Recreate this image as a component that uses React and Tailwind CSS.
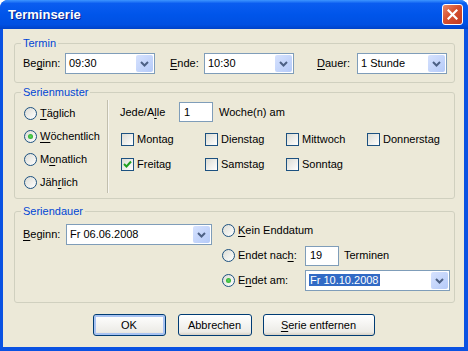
import React from 'react'

function U({ children }) {
    return <span className="underline decoration-1 underline-offset-[2px]">{children}</span>
}

function DropButton() {
    return (
        <div className="mr-px flex h-[17px] w-[17px] items-center justify-center rounded-[2px] bg-[linear-gradient(135deg,#D6E2FE,#B5CAF8)]">
            <svg width="9" height="6" viewBox="0 0 9 6">
                <path d="M1 1 L4.5 4.5 L8 1" fill="none" stroke="#4D6185" strokeWidth="2" />
            </svg>
        </div>
    )
}

function Combo({ className, value, selected }) {
    return (
        <div className={`flex h-[21px] items-center border border-[#7F9DB9] bg-white ${className}`}>
            <div className="flex-1 pl-[3px] whitespace-nowrap">
                {selected ? <span className="bg-[#316AC5] px-px text-white">{value}</span> : value}
            </div>
            <DropButton />
        </div>
    )
}

function Radio({ checked, children, labelClass = '' }) {
    return (
        <div className="flex items-center">
            <span className="flex h-[13px] w-[13px] items-center justify-center rounded-full border border-[#1C5180] bg-[linear-gradient(135deg,#DCDCD4,#FFFFFF)]">
                {checked && <span className="h-[5px] w-[5px] rounded-full bg-[radial-gradient(circle,#5BD65B,#21A121)]" />}
            </span>
            <span className={`ml-[3px] whitespace-nowrap ${labelClass}`}>{children}</span>
        </div>
    )
}

function Check({ checked, children }) {
    return (
        <div className="flex h-[13px] items-center">
            <span className="flex h-[13px] w-[13px] items-center justify-center border border-[#1C5180] bg-[linear-gradient(135deg,#DCDCD4,#FFFFFF)]">
                {checked && (
                    <svg width="9" height="9" viewBox="0 0 9 9">
                        <path d="M1 4 L3.5 6.5 L8 1.5" fill="none" stroke="#21A121" strokeWidth="2" />
                    </svg>
                )}
            </span>
            <span className="ml-[3px] whitespace-nowrap">{children}</span>
        </div>
    )
}

function TextBox({ value }) {
    return (
        <div className="flex h-[20px] w-[34px] items-center border border-[#7F9DB9] bg-white pl-[4px]">{value}</div>
    )
}

function Group({ title, className = '', children }) {
    return (
        <fieldset className={`ml-[11px] mr-[9px] rounded-[3px] border border-[#D0D0BF] ${className}`}>
            <legend className="ml-[6px] px-[2px] leading-[13px] text-[#0046D5]">{title}</legend>
            {children}
        </fieldset>
    )
}

export default function App() {
    const days = [
        { label: 'Montag' },
        { label: 'Dienstag' },
        { label: 'Mittwoch' },
        { label: 'Donnerstag' },
        { label: 'Freitag', checked: true },
        { label: 'Samstag' },
        { label: 'Sonntag' },
    ]

    return (
        <div className="flex h-[351px] w-[468px] flex-col overflow-hidden rounded-t-[8px] bg-[#0A52E2] font-['Liberation_Sans',Arial,sans-serif] text-[11px] leading-[13px] text-black">
            {/* Title bar */}
            <div className="flex h-[29px] shrink-0 items-center justify-between bg-[linear-gradient(180deg,#3D95FF_0%,#0A5DF0_12%,#0055EA_50%,#0050E2_85%,#0042C8_100%)] pl-[8px] pr-[5px]">
                <span className="text-[13px] font-bold text-white [text-shadow:1px_1px_0_#0A1E8A]">Terminserie</span>
                <div className="flex h-[21px] w-[21px] items-center justify-center rounded-[3px] border border-white bg-[linear-gradient(135deg,#E98A6A,#D6502F_45%,#C13A22)]">
                    <svg width="11" height="11" viewBox="0 0 11 11">
                        <path d="M1.5 1.5 L9.5 9.5 M9.5 1.5 L1.5 9.5" stroke="white" strokeWidth="2.2" strokeLinecap="square" />
                    </svg>
                </div>
            </div>

            {/* Body */}
            <div className="mb-[4px] ml-[3px] mr-[4px] flex flex-1 flex-col bg-[#ECE9D8]">
                {/* Termin */}
                <Group title="Termin" className="mt-[8px] pb-[8px] pt-[3px]">
                    <div className="flex items-center pl-[8px]">
                        <span className="w-[42px]">Be<U>g</U>inn:</span>
                        <Combo className="w-[90px]" value="09:30" />
                        <span className="ml-[15px] w-[34px]"><U>E</U>nde:</span>
                        <Combo className="w-[90px]" value="10:30" />
                        <span className="ml-[23px] w-[40px]"><U>D</U>auer:</span>
                        <Combo className="w-[90px]" value="1 Stunde" />
                    </div>
                </Group>

                {/* Serienmuster */}
                <Group title="Serienmuster" className="mt-[3px] pb-[4px]">
                    <div className="flex pt-[3px]">
                        <div className="flex w-[92px] flex-col pl-[9px]">
                            <div className="flex h-[23px] items-center"><Radio><U>T</U>äglich</Radio></div>
                            <div className="flex h-[23px] items-center"><Radio checked><U>W</U>öchentlich</Radio></div>
                            <div className="flex h-[23px] items-center"><Radio>M<U>o</U>natlich</Radio></div>
                            <div className="flex h-[23px] items-center"><Radio>Jäh<U>r</U>lich</Radio></div>
                        </div>
                        <div className="mt-[-2px] h-[93px] w-[2px] border-l border-r border-l-[#C2BFAE] border-r-[#F7F6F0]" />
                        <div className="flex flex-col pl-[11px]">
                            <div className="flex h-[20px] items-center">
                                <span className="w-[59px]">Jede/A<U>l</U>le</span>
                                <TextBox value="1" />
                                <span className="ml-[6px]">Woche(n) am</span>
                            </div>
                            <div className="ml-px mt-[11px] grid grid-cols-[84px_81px_81px_auto] gap-y-[12px]">
                                {days.map((d) => (
                                    <Check key={d.label} checked={d.checked}>{d.label}</Check>
                                ))}
                            </div>
                        </div>
                    </div>
                </Group>

                {/* Seriendauer */}
                <Group title="Seriendauer" className="mt-[6px] pb-[9px]">
                    <div className="flex">
                        <div className="flex items-center pl-[8px] pt-[6px] self-start">
                            <span className="w-[43px]"><U>B</U>eginn:</span>
                            <Combo className="w-[146px]" value="Fr 06.06.2008" />
                        </div>
                        <div className="ml-[10px] flex flex-col">
                            <div className="flex h-[25px] items-center">
                                <Radio><U>K</U>ein Enddatum</Radio>
                            </div>
                            <div className="flex h-[25px] items-center">
                                <Radio labelClass="w-[67px]">Endet nac<U>h</U>:</Radio>
                                <TextBox value="19" />
                                <span className="ml-[5px]">Terminen</span>
                            </div>
                            <div className="flex h-[25px] items-center">
                                <Radio checked labelClass="w-[67px]">E<U>n</U>det am:</Radio>
                                <Combo className="w-[145px]" value="Fr 10.10.2008" selected />
                            </div>
                        </div>
                    </div>
                </Group>

                {/* Buttons */}
                <div className="mt-[11px] flex justify-center gap-[11px]">
                    <button className="h-[22px] w-[73px] rounded-[3px] border border-[#003C74] bg-[linear-gradient(180deg,#FFFFFF,#ECEBE6_85%,#D6D0C5)] shadow-[inset_0_0_0_2px_#A8C3F2]">OK</button>
                    <button className="ml-px h-[22px] w-[74px] rounded-[3px] border border-[#003C74] bg-[linear-gradient(180deg,#FFFFFF,#ECEBE6_85%,#D6D0C5)]">Abbrechen</button>
                    <button className="h-[22px] w-[112px] rounded-[3px] border border-[#003C74] bg-[linear-gradient(180deg,#FFFFFF,#ECEBE6_85%,#D6D0C5)]"><U>S</U>erie entfernen</button>
                </div>
            </div>
        </div>
    )
}
